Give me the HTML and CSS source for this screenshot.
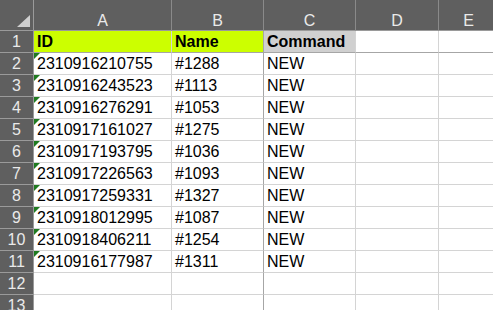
FILE: index.html
```html
<!DOCTYPE html>
<html lang="en">

<head>
    <meta charset="UTF-8">
    <title>Sheet1</title>
    <link rel="stylesheet" href="styles.css">
</head>

<body>
    <div class="sheet">
        <div class="row head-row">
            <div class="cell corner"><span class="corner-tri"></span></div>
            <div class="cell col-head col-a">A</div>
            <div class="cell col-head col-b">B</div>
            <div class="cell col-head col-c">C</div>
            <div class="cell col-head col-d">D</div>
            <div class="cell col-head col-e">E</div>
        </div>
        <div class="row first-row">
            <div class="cell row-head">1</div>
            <div class="cell col-a title lime">ID</div>
            <div class="cell col-b title lime frozen">Name</div>
            <div class="cell col-c title grey">Command</div>
            <div class="cell col-d"></div>
            <div class="cell col-e"></div>
        </div>
        <div class="row">
            <div class="cell row-head">2</div>
            <div class="cell col-a text-num">2310916210755</div>
            <div class="cell col-b frozen">#1288</div>
            <div class="cell col-c">NEW</div>
            <div class="cell col-d"></div>
            <div class="cell col-e"></div>
        </div>
        <div class="row">
            <div class="cell row-head">3</div>
            <div class="cell col-a text-num">2310916243523</div>
            <div class="cell col-b frozen">#1113</div>
            <div class="cell col-c">NEW</div>
            <div class="cell col-d"></div>
            <div class="cell col-e"></div>
        </div>
        <div class="row">
            <div class="cell row-head">4</div>
            <div class="cell col-a text-num">2310916276291</div>
            <div class="cell col-b frozen">#1053</div>
            <div class="cell col-c">NEW</div>
            <div class="cell col-d"></div>
            <div class="cell col-e"></div>
        </div>
        <div class="row">
            <div class="cell row-head">5</div>
            <div class="cell col-a text-num">2310917161027</div>
            <div class="cell col-b frozen">#1275</div>
            <div class="cell col-c">NEW</div>
            <div class="cell col-d"></div>
            <div class="cell col-e"></div>
        </div>
        <div class="row">
            <div class="cell row-head">6</div>
            <div class="cell col-a text-num">2310917193795</div>
            <div class="cell col-b frozen">#1036</div>
            <div class="cell col-c">NEW</div>
            <div class="cell col-d"></div>
            <div class="cell col-e"></div>
        </div>
        <div class="row">
            <div class="cell row-head">7</div>
            <div class="cell col-a text-num">2310917226563</div>
            <div class="cell col-b frozen">#1093</div>
            <div class="cell col-c">NEW</div>
            <div class="cell col-d"></div>
            <div class="cell col-e"></div>
        </div>
        <div class="row">
            <div class="cell row-head">8</div>
            <div class="cell col-a text-num">2310917259331</div>
            <div class="cell col-b frozen">#1327</div>
            <div class="cell col-c">NEW</div>
            <div class="cell col-d"></div>
            <div class="cell col-e"></div>
        </div>
        <div class="row">
            <div class="cell row-head">9</div>
            <div class="cell col-a text-num">2310918012995</div>
            <div class="cell col-b frozen">#1087</div>
            <div class="cell col-c">NEW</div>
            <div class="cell col-d"></div>
            <div class="cell col-e"></div>
        </div>
        <div class="row">
            <div class="cell row-head">10</div>
            <div class="cell col-a text-num">2310918406211</div>
            <div class="cell col-b frozen">#1254</div>
            <div class="cell col-c">NEW</div>
            <div class="cell col-d"></div>
            <div class="cell col-e"></div>
        </div>
        <div class="row">
            <div class="cell row-head">11</div>
            <div class="cell col-a text-num">2310916177987</div>
            <div class="cell col-b frozen">#1311</div>
            <div class="cell col-c">NEW</div>
            <div class="cell col-d"></div>
            <div class="cell col-e"></div>
        </div>
        <div class="row">
            <div class="cell row-head">12</div>
            <div class="cell col-a"></div>
            <div class="cell col-b frozen"></div>
            <div class="cell col-c"></div>
            <div class="cell col-d"></div>
            <div class="cell col-e"></div>
        </div>
        <div class="row">
            <div class="cell row-head">13</div>
            <div class="cell col-a"></div>
            <div class="cell col-b frozen"></div>
            <div class="cell col-c"></div>
            <div class="cell col-d"></div>
            <div class="cell col-e"></div>
        </div>
    </div>
</body>

</html>
```

FILE: styles.css
```css
body {
    margin: 0;
    background: #fff;
    font-family: 'Liberation Sans', Arial, sans-serif;
    font-size: 16px;
    color: #000;
    overflow: hidden;
}

.sheet {
    display: flex;
    flex-direction: column;
    width: 493px;
}

.row {
    display: flex;
    height: 22px;
}

.head-row {
    height: 31px;
}

.cell {
    box-sizing: border-box;
    flex: none;
    height: 100%;
    border-right: 1px solid #d4d4d4;
    border-bottom: 1px solid #d4d4d4;
    padding: 0 3px;
    line-height: 22px;
    white-space: nowrap;
    overflow: hidden;
    position: relative;
}

.corner,
.row-head {
    width: 34px;
    background: #5f5f5f;
    border-right-color: #9a9a9a;
    border-bottom-color: #9a9a9a;
}

.corner-tri {
    position: absolute;
    right: 3px;
    bottom: 3px;
    width: 0;
    height: 0;
    border-left: 13px solid transparent;
    border-bottom: 12px solid #d0d0d0;
}

.row-head {
    color: #eaeaea;
    text-align: center;
    padding: 0;
}

.col-head {
    background: #5f5f5f;
    color: #eaeaea;
    text-align: center;
    line-height: 42px;
    border-right-color: #8a8a8a;
    border-bottom-color: #9a9a9a;
}

.col-a { width: 138px; }
.col-b { width: 92px; }
.col-c { width: 92px; }
.col-d { width: 83px; }
.col-e { width: 60px; }

.first-row .cell {
    border-bottom: 1px solid #a6a6a6;
}

.first-row .row-head {
    border-bottom-color: #9a9a9a;
}

.frozen {
    border-right-color: #a6a6a6;
}

.title {
    font-weight: bold;
}

.lime {
    background: #ccff00;
}

.grey {
    background: #d0d0d0;
}

.text-num::before {
    content: "";
    position: absolute;
    left: 0;
    top: 0;
    border-top: 6px solid #1f7a1f;
    border-right: 6px solid transparent;
}
```
